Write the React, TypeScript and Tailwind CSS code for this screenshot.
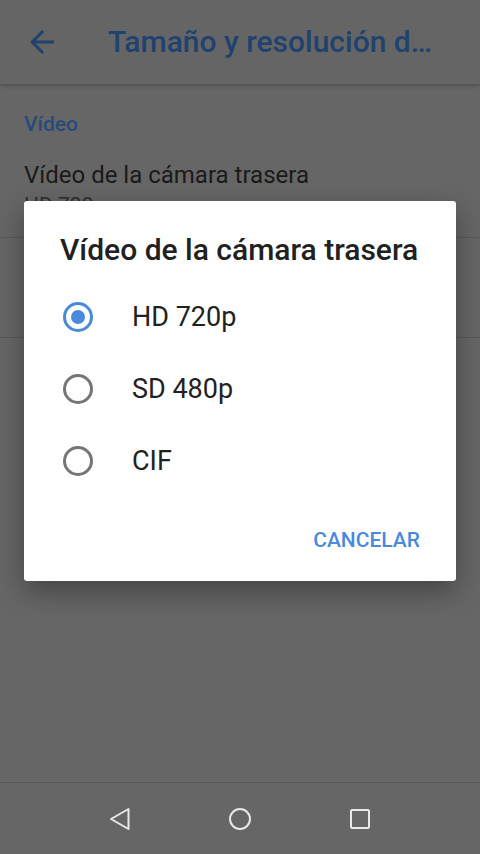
import React from 'react';

const OPTIONS = ['HD 720p', 'SD 480p', 'CIF'];

function Radio({ checked }: { checked: boolean }) {
  return (
    <span
      className={
        'flex h-[30px] w-[30px] shrink-0 items-center justify-center rounded-full border-[3px] ' +
        (checked ? 'border-[#4a89dc]' : 'border-[#757575]')
      }
    >
      {checked && <span className="h-[14px] w-[14px] rounded-full bg-[#4a89dc]" />}
    </span>
  );
}

export default function App() {
  return (
    <div className="relative flex h-[854px] w-[480px] flex-col overflow-hidden bg-[#666666] font-['Roboto',sans-serif]">
      {/* toolbar */}
      <header className="relative z-10 flex h-[84px] shrink-0 items-center bg-[#656565] shadow-[0_2px_4px_rgba(0,0,0,0.22)]">
        <button className="ml-[24px] flex h-[36px] w-[36px] items-center justify-center">
          <svg viewBox="0 0 24 24" className="h-[36px] w-[36px] fill-[#1f426f]">
            <path d="M20 11H7.83l5.59-5.59L12 4l-8 8 8 8 1.41-1.41L7.83 13H20v-2z" />
          </svg>
        </button>
        <h1 className="ml-[48px] w-[330px] truncate text-[30px] font-medium leading-[36px] text-[#1f426f]">
          Tamaño y resolución de vídeo
        </h1>
      </header>

      {/* preference list under the scrim */}
      <main className="flex-1">
        <div className="px-[24px] pt-[28px] text-[21px] font-medium leading-[24px] text-[#284a7c]">Vídeo</div>
        <div className="h-[101px] px-[24px] pt-[25px]">
          <div className="text-[24px] leading-[28px] text-[#1a1a1a]">Vídeo de la cámara trasera</div>
          <div className="mt-[4px] text-[21px] leading-[24px] text-[#2e2e2e]">HD 720p</div>
        </div>
        <div className="h-px bg-[#595959]" />
        <div className="h-[99px] px-[24px] pt-[25px]">
          <div className="text-[24px] leading-[28px] text-[#1a1a1a]">Vídeo de la cámara frontal</div>
          <div className="mt-[4px] text-[21px] leading-[24px] text-[#2e2e2e]">HD 720p</div>
        </div>
        <div className="h-px bg-[#595959]" />
      </main>

      {/* nav bar */}
      <nav className="flex h-[72px] shrink-0 items-center justify-center border-t border-[#585858] bg-[#666666]">
        <div className="flex w-[120px] justify-center">
          <svg viewBox="0 0 24 24" className="h-[24px] w-[24px]" fill="none" stroke="#e8e8e8" strokeWidth="2" strokeLinejoin="round">
            <path d="M3 12 L20.5 2 L20.5 22 Z" />
          </svg>
        </div>
        <div className="flex w-[120px] justify-center">
          <svg viewBox="0 0 24 24" className="h-[24px] w-[24px]" fill="none" stroke="#e8e8e8" strokeWidth="2">
            <circle cx="12" cy="12" r="10" />
          </svg>
        </div>
        <div className="flex w-[120px] justify-center">
          <svg viewBox="0 0 24 24" className="h-[24px] w-[24px]" fill="none" stroke="#e8e8e8" strokeWidth="2">
            <rect x="3" y="3" width="18" height="18" rx="1" />
          </svg>
        </div>
      </nav>

      {/* dialog */}
      <div className="absolute left-[24px] top-[201px] z-20 h-[380px] w-[432px] rounded-[3px] bg-white shadow-[0_10px_28px_rgba(0,0,0,0.35)]">
        <h2 className="pl-[36px] pt-[31px] text-[30px] font-medium leading-[36px] text-[#212121]">
          Vídeo de la cámara trasera
        </h2>
        <ul className="mt-[13px]">
          {OPTIONS.map((o, i) => (
            <li key={o} className="flex h-[72px] items-center">
              <span className="ml-[39px]">
                <Radio checked={i === 0} />
              </span>
              <span className="ml-[39px] text-[27px] leading-[32px] text-[#212121]">{o}</span>
            </li>
          ))}
        </ul>
        <div className="mt-[31px] flex justify-end pr-[36px]">
          <button className="text-[21px] font-medium uppercase leading-[24px] text-[#4a89dc]">Cancelar</button>
        </div>
      </div>
    </div>
  );
}
